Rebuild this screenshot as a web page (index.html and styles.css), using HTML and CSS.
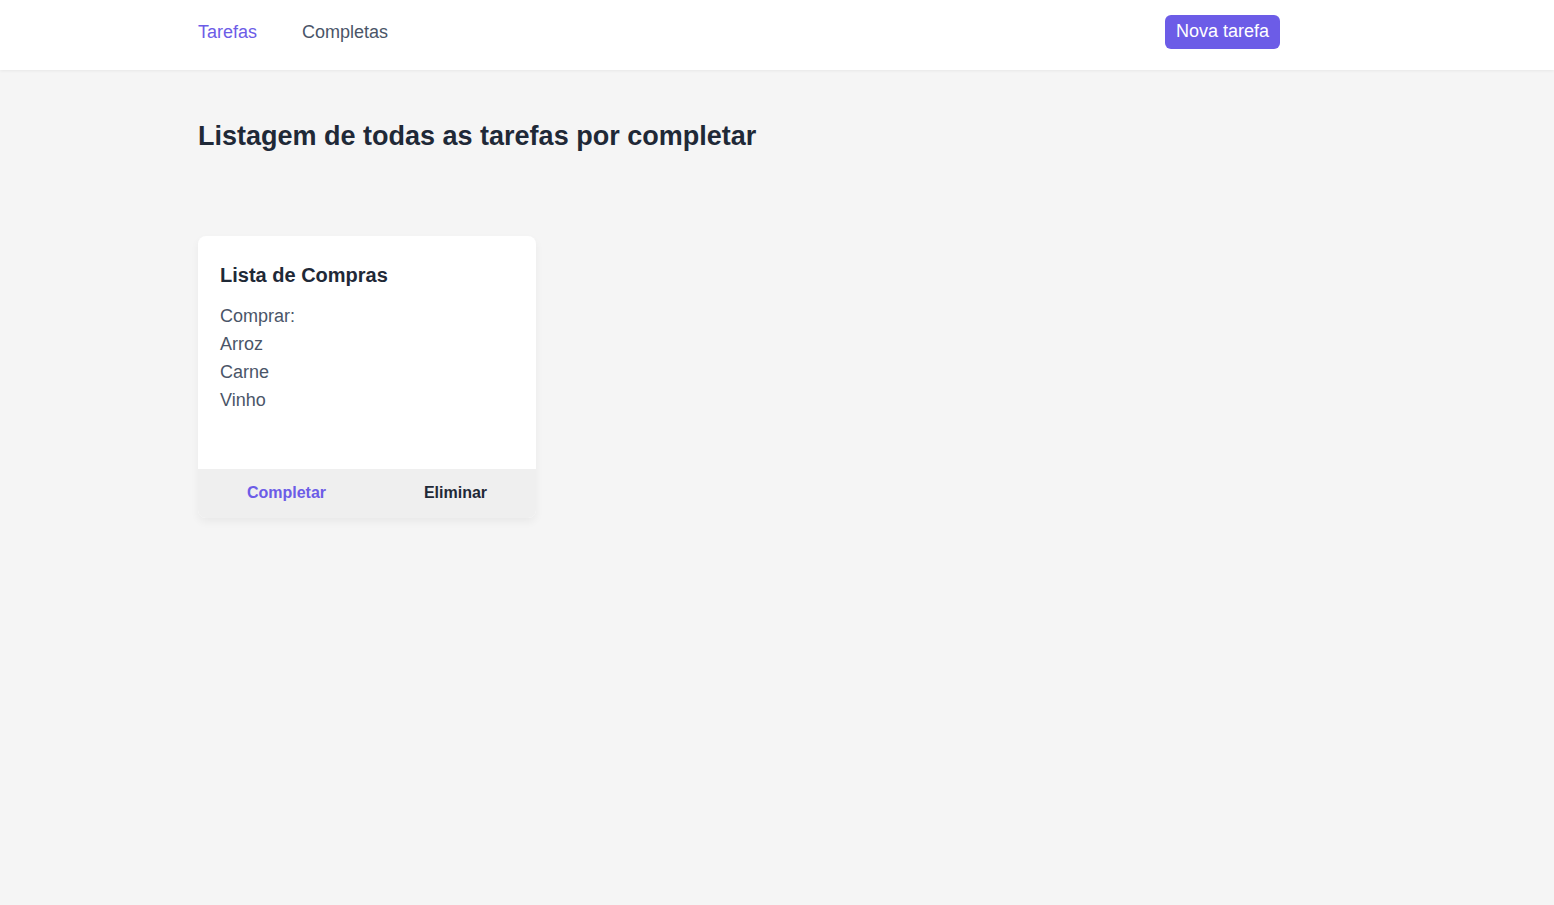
FILE: index.html
```html
<!DOCTYPE html>
<html lang="pt">
<head>
<meta charset="utf-8">
<title>Tarefas</title>
<link rel="stylesheet" href="styles.css">
</head>
<body>
<header class="topbar">
  <div class="container topbar-inner">
    <nav class="nav">
      <a class="nav-link active" href="#">Tarefas</a>
      <a class="nav-link" href="#">Completas</a>
    </nav>
    <button class="btn-primary">Nova tarefa</button>
  </div>
</header>
<main class="container main">
  <h1 class="page-title">Listagem de todas as tarefas por completar</h1>
  <div class="grid">
    <div class="card">
      <div class="card-body">
        <h2 class="card-title">Lista de Compras</h2>
        <p class="card-text">Comprar:<br>Arroz<br>Carne<br>Vinho</p>
      </div>
      <div class="card-footer">
        <button class="card-btn complete">Completar</button>
        <button class="card-btn delete">Eliminar</button>
      </div>
    </div>
  </div>
</main>
</body>
</html>
```
FILE: styles.css
```css
* { box-sizing: border-box; }
html, body { margin: 0; padding: 0; }
body {
  background: #f5f5f5;
  font-family: "Liberation Sans", Arial, sans-serif;
  color: #1f2937;
  min-height: 905px;
}
.container {
  margin-left: 198px;
  width: 1082px;
}
.topbar {
  background: #ffffff;
  height: 70px;
  box-shadow: 0 1px 3px rgba(0,0,0,0.06);
}
.topbar-inner {
  height: 70px;
  display: flex;
  align-items: center;
  justify-content: space-between;
  padding-bottom: 6px;
}
.nav { display: flex; gap: 45px; }
.nav-link {
  font-size: 18px;
  color: #4a5568;
  text-decoration: none;
}
.nav-link.active { color: #6c5ce7; }
.btn-primary {
  background: #6c5ce7;
  color: #ffffff;
  border: none;
  border-radius: 6px;
  font-family: inherit;
  font-size: 18px;
  height: 34px;
  padding: 0 11px;
  margin-bottom: 1px;
}
.main { padding-top: 49px; }
.page-title {
  margin: 0;
  font-size: 27px;
  font-weight: bold;
  color: #1f2937;
  line-height: 34px;
}
.grid {
  margin-top: 83px;
  display: grid;
  grid-template-columns: 338px;
}
.card {
  background: #ffffff;
  border-radius: 8px;
  overflow: hidden;
  box-shadow: 0 4px 8px rgba(0,0,0,0.05);
}
.card-body {
  padding: 25px 22px 0 22px;
  height: 233px;
}
.card-title {
  margin: 0;
  font-size: 20px;
  font-weight: bold;
  line-height: 28px;
  color: #1f2937;
}
.card-text {
  margin: 13px 0 0 0;
  font-size: 18px;
  line-height: 28px;
  color: #4a5568;
}
.card-footer {
  display: flex;
  background: #efefef;
  height: 49px;
  padding-bottom: 2px;
}
.card-btn {
  flex: 1;
  background: transparent;
  border: none;
  font-family: inherit;
  font-size: 16px;
  font-weight: bold;
  padding-left: 14px;
}
.card-btn.complete { color: #6c5ce7; }
.card-btn.delete { color: #1f2937; }
```
